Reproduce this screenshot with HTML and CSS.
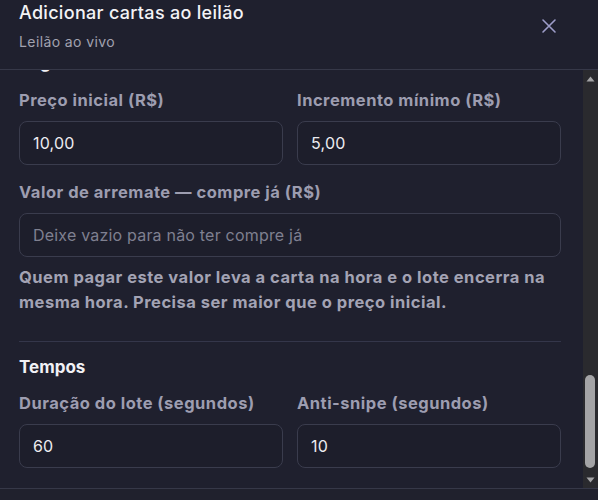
FILE: index.html
```html
<!DOCTYPE html>
<html lang="pt-BR">
<head>
<meta charset="utf-8">
<title>Adicionar cartas ao leilão</title>
<link rel="stylesheet" href="styles.css">
</head>
<body>
<div class="modal">
  <header class="modal-header">
    <div class="titles">
      <h1 class="title">Adicionar cartas ao leilão</h1>
      <p class="subtitle">Leilão ao vivo</p>
    </div>
    <button class="close" aria-label="Fechar">
      <svg width="16" height="16" viewBox="0 0 16 16"><path d="M2 2L14 14M14 2L2 14" stroke="currentColor" stroke-width="1.6" stroke-linecap="round"/></svg>
    </button>
  </header>
  <div class="body-wrap">
    <div class="modal-body" id="scroller">
      <section class="section cards-section">
        <h2 class="section-title">Cartas selecionadas</h2>
        <div class="card-grid">
          <div class="card-tile"></div><div class="card-tile"></div><div class="card-tile"></div><div class="card-tile"></div>
          <div class="card-tile"></div><div class="card-tile"></div><div class="card-tile"></div><div class="card-tile"></div>
          <div class="card-tile"></div><div class="card-tile"></div><div class="card-tile"></div><div class="card-tile"></div>
          <div class="card-tile"></div><div class="card-tile"></div><div class="card-tile"></div><div class="card-tile"></div>
        </div>
      </section>
      <section class="section">
        <h2 class="section-title rules-title">Regras</h2>
        <div class="row">
          <label class="field">
            <span class="label">Preço inicial (R$)</span>
            <input class="input" type="text" value="10,00">
          </label>
          <label class="field">
            <span class="label">Incremento mínimo (R$)</span>
            <input class="input" type="text" value="5,00">
          </label>
        </div>
        <label class="field field-full">
          <span class="label">Valor de arremate — compre já (R$)</span>
          <input class="input" type="text" placeholder="Deixe vazio para não ter compre já">
        </label>
        <p class="help">Quem pagar este valor leva a carta na hora e o lote encerra na mesma hora. Precisa ser maior que o preço inicial.</p>
      </section>
      <section class="section">
        <h2 class="section-title">Tempos</h2>
        <div class="row">
          <label class="field">
            <span class="label">Duração do lote (segundos)</span>
            <input class="input" type="text" value="60">
          </label>
          <label class="field">
            <span class="label">Anti-snipe (segundos)</span>
            <input class="input" type="text" value="10">
          </label>
        </div>
      </section>
    </div>
    <div class="scrollbar" aria-hidden="true">
      <div class="sb-btn"><svg width="9" height="6" viewBox="0 0 9 6"><path d="M0.5 5.5h8L4.5 0.5z" fill="#a4a4a6"/></svg></div>
      <div class="sb-track"><div class="sb-thumb"></div></div>
      <div class="sb-btn"><svg width="9" height="6" viewBox="0 0 9 6"><path d="M0.5 0.5h8L4.5 5.5z" fill="#a4a4a6"/></svg></div>
    </div>
  </div>
  <footer class="modal-footer"></footer>
</div>
<script src="app.js"></script>
</body>
</html>
```
FILE: styles.css
```css
* { box-sizing: border-box; }
html, body { margin: 0; padding: 0; }
body {
  background: #1f202e;
  font-family: Inter, "Noto Sans", "Liberation Sans", sans-serif;
  color: #ececf1;
}
.modal {
  width: 598px;
  height: 500px;
  display: flex;
  flex-direction: column;
  background: #1f202e;
}
.modal-header {
  flex: 0 0 70px;
  display: flex;
  align-items: flex-start;
  justify-content: space-between;
  padding: 2px 37px 0 19px;
  border-bottom: 1px solid #363848;
}
.titles { display: flex; flex-direction: column; }
.title {
  margin: 0;
  font-size: 18px;
  line-height: 22px;
  font-weight: 500;
  letter-spacing: 0.3px;
  color: #f3f3f6;
}
.subtitle {
  margin: 9px 0 0;
  font-size: 14px;
  line-height: 18px;
  letter-spacing: 0.4px;
  color: #a2a2b0;
}
.close {
  margin-top: 12px;
  width: 24px;
  height: 24px;
  padding: 0;
  border: 0;
  background: transparent;
  color: #9d9dc9;
  display: flex;
  align-items: center;
  justify-content: center;
}
.body-wrap {
  flex: 1 1 auto;
  min-height: 0;
  display: flex;
}
.modal-body {
  flex: 1 1 auto;
  overflow: hidden;
  padding: 0 22px 20px 19px;
}
.scrollbar {
  flex: 0 0 15px;
  display: flex;
  flex-direction: column;
  background: #2a2a2e;
}
.sb-btn {
  flex: 0 0 17px;
  display: flex;
  align-items: center;
  justify-content: center;
}
.sb-track {
  flex: 1 1 auto;
  display: flex;
  flex-direction: column;
  justify-content: flex-end;
  padding: 0 3px 3px 2px;
}
.sb-thumb {
  height: 93px;
  border-radius: 5px;
  background: #a4a4a6;
}
.section {
  padding-top: 14px;
  border-top: 1px solid #34364a;
}
.section:first-child { border-top: 0; padding-top: 20px; padding-bottom: 26px; }
.section-title {
  margin: 0 0 14px;
  font-size: 17px;
  line-height: 22px;
  font-weight: 700;
  color: #f1f1f5;
}
.rules-title { margin-bottom: 16px; }
.card-grid {
  display: grid;
  grid-template-columns: repeat(4, 1fr);
  grid-auto-rows: 188px;
  gap: 12px;
}
.card-tile {
  border: 1px solid #34364a;
  border-radius: 8px;
  background: #252637;
}
.row {
  display: grid;
  grid-template-columns: 1fr 1fr;
  gap: 14px;
}
.field { display: flex; flex-direction: column; }
.field-full { margin-top: 16px; }
.label {
  font-size: 16.5px;
  line-height: 22px;
  font-weight: 700;
  letter-spacing: 0.5px;
  color: #9d9db0;
  margin-bottom: 10px;
  white-space: nowrap;
}
.input {
  height: 44px;
  width: 100%;
  padding: 0 13px;
  border: 1px solid #3a3c4d;
  border-radius: 8px;
  background: #1d1e2b;
  color: #ececf1;
  font-family: inherit;
  font-size: 16px;
  letter-spacing: 0.2px;
  outline: none;
}
.input::placeholder { color: #7f8090; }
.help {
  margin: 8px 0 0;
  padding-bottom: 26px;
  font-size: 16.5px;
  line-height: 25px;
  font-weight: 700;
  letter-spacing: 0.5px;
  color: #a3a3b4;
}
.modal-footer {
  flex: 0 0 12px;
  border-top: 1px solid #363848;
  background: #20212d;
}
```
FILE: app.js
```js
var s = document.getElementById('scroller');
s.scrollTop = s.scrollHeight;
```
